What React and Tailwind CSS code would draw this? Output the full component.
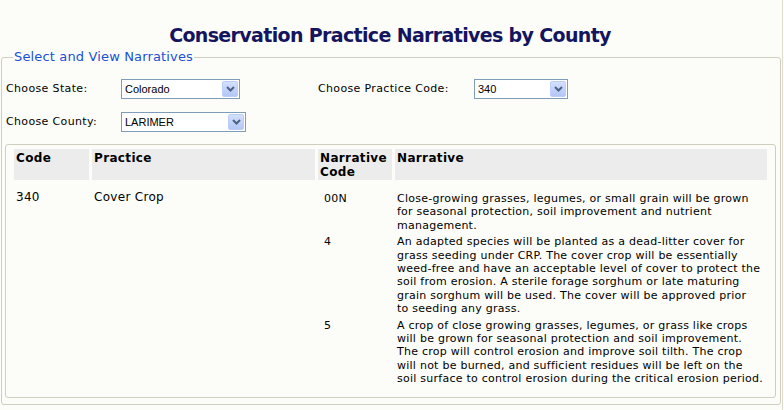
import React from "react";

// lines broken as on the original page
const narratives = [
  {
    code: "00N",
    lines: [
      "Close-growing grasses, legumes, or small grain will be grown",
      "for seasonal protection, soil improvement and nutrient",
      "management.",
    ],
  },
  {
    code: "4",
    lines: [
      "An adapted species will be planted as a dead-litter cover for",
      "grass seeding under CRP. The cover crop will be essentially",
      "weed-free and have an acceptable level of cover to protect the",
      "soil from erosion. A sterile forage sorghum or late maturing",
      "grain sorghum will be used. The cover will be approved prior",
      "to seeding any grass.",
    ],
  },
  {
    code: "5",
    lines: [
      "A crop of close growing grasses, legumes, or grass like crops",
      "will be grown for seasonal protection and soil improvement.",
      "The crop will control erosion and improve soil tilth. The crop",
      "will not be burned, and sufficient residues will be left on the",
      "soil surface to control erosion during the critical erosion period.",
    ],
  },
];

function Select({ value, width }) {
  return (
    <div
      className="flex h-[20px] items-center border border-[#7f9db9] bg-white"
      style={{ width }}
    >
      <span className="flex-1 pl-[3px] font-['Liberation_Sans',Arial,sans-serif] text-[11px] tracking-normal text-black">
        {value}
      </span>
      <div className="mr-[1px] flex h-[16px] w-[16px] items-center justify-center rounded-[2px] border border-[#bccef8] bg-gradient-to-b from-[#d3e0fd] to-[#b3c7f5]">
        <svg width="9" height="6" viewBox="0 0 9 6">
          <path d="M1 1 L4.5 4.5 L8 1" fill="none" stroke="#4d6185" strokeWidth="2" />
        </svg>
      </div>
    </div>
  );
}

export default function App() {
  return (
    <div className="relative h-[410px] w-[784px] overflow-hidden bg-[#fcfdf9] font-['DejaVu_Sans',Verdana,sans-serif] text-black">
      {/* page edge */}
      <div className="absolute right-[1px] top-0 h-full w-[1px] bg-[#dedbd2]" />

      <h1 className="w-[780px] pt-[24px] text-center text-[19px] font-bold leading-[23px] tracking-[-0.65px] text-[#14145f]">
        Conservation Practice Narratives by County
      </h1>

      <fieldset className="ml-[1px] mt-[2px] w-[780px] rounded-[3px] border border-[#d0cebf] pb-[6px] pl-[3px] pr-[4px]">
        <legend className="ml-[8px] px-[1px] text-[13px] leading-[16px] tracking-[0.15px] text-[#1b50d4]">
          Select and View Narratives
        </legend>

        {/* ── Filters ─────────────────────────────── */}
        <div className="mt-[14px] flex flex-col gap-[13px] pl-[1px] text-[11px] tracking-[0.35px]">
          <div className="flex items-center">
            <span className="w-[115px]">Choose State:</span>
            <Select value="Colorado" width="119px" />
            <span className="ml-[78px] w-[156px]">Choose Practice Code:</span>
            <Select value="340" width="94px" />
          </div>
          <div className="flex items-center">
            <span className="w-[115px]">Choose County:</span>
            <Select value="LARIMER" width="125px" />
          </div>
        </div>

        {/* ── Results ─────────────────────────────── */}
        <div className="mt-[12px] h-[254px] rounded-[3px] border border-[#d0cebf] pl-[8px] pt-[4px]">
          <div className="grid grid-cols-[75px_223px_74px_372px] gap-x-[3px]">
            <div className="h-[31px] bg-[#ececec] pl-[2px] pt-[2px] text-[12px] font-bold leading-[14px] tracking-[0.35px]">Code</div>
            <div className="bg-[#ececec] pl-[2px] pt-[2px] text-[12px] font-bold leading-[14px] tracking-[0.35px]">Practice</div>
            <div className="bg-[#ececec] pl-[2px] pt-[2px] text-[12px] font-bold leading-[14px] tracking-[0.35px]">Narrative Code</div>
            <div className="bg-[#ececec] pl-[2px] pt-[2px] text-[12px] font-bold leading-[14px] tracking-[0.35px]">Narrative</div>

            <div className="pl-[2px] pt-[10px] text-[12px] leading-[15px] tracking-[0.3px]">340</div>
            <div className="pl-[2px] pt-[10px] text-[12px] leading-[15px] tracking-[0.3px]">Cover Crop</div>
            <div className="col-span-2 grid grid-cols-[74px_372px] gap-x-[3px] gap-y-[3px] pt-[12px] text-[11px] leading-[13.4px] tracking-[0.25px]">
              {narratives.map((n) => (
                <React.Fragment key={n.code}>
                  <div className="pl-[6px]">{n.code}</div>
                  <div className="whitespace-nowrap pl-[2px]">
                    {n.lines.map((line, i) => (
                      <div key={i}>{line}</div>
                    ))}
                  </div>
                </React.Fragment>
              ))}
            </div>
          </div>
        </div>
      </fieldset>
    </div>
  );
}
